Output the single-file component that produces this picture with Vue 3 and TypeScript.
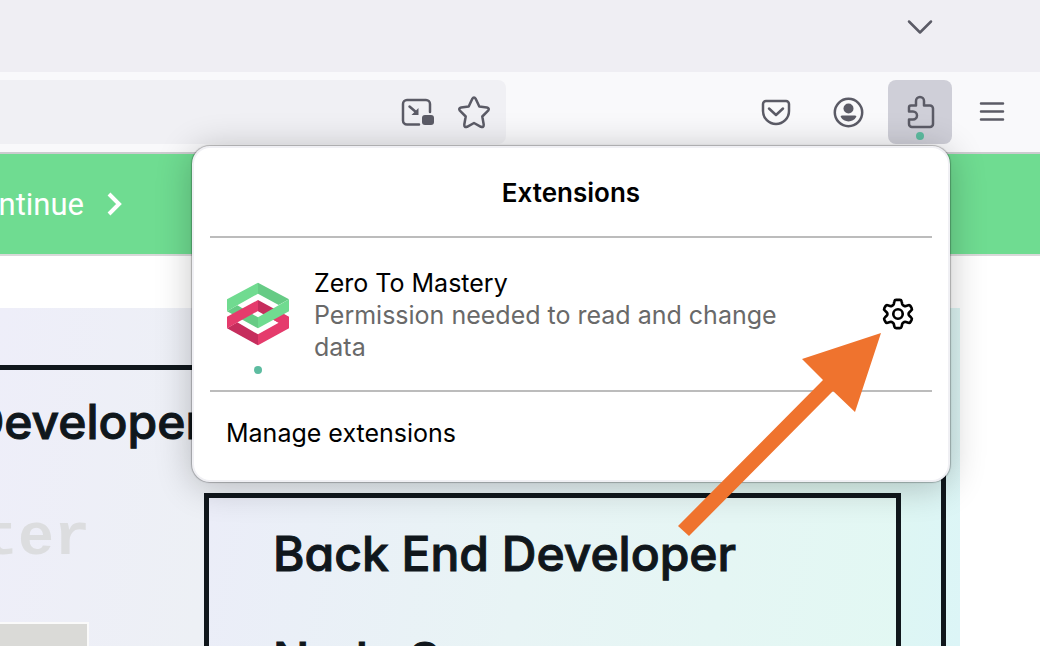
<script setup lang="ts">
interface Extension {
  name: string
  status: string
}

const extensions: Extension[] = [
  { name: 'Zero To Mastery', status: 'Permission needed to read and change data' },
]
</script>

<template>
  <div class="browser">
    <header class="tab-strip">
      <button class="tool tabs-button" type="button" aria-label="List all tabs">
        <svg width="28" height="18" viewBox="0 0 28 18"><path d="M3 3.500 14 14.500 25 3.500" class="line" /></svg>
      </button>
    </header>

    <div class="toolbar">
      <div class="address">
        <button class="tool" type="button" aria-label="Picture-in-picture">
          <svg width="36" height="32" viewBox="0 0 36 32">
            <path class="line" d="M19 28.500H7a4 4 0 0 1-4-4V8a4 4 0 0 1 4-4h19a4 4 0 0 1 4 4v8" />
            <path class="line" d="m9.500 10.500 7 6" />
            <path class="solid" d="M18.500 12v7h-7z" />
            <rect class="solid" x="22" y="19" width="12" height="10" rx="3" />
          </svg>
        </button>
        <button class="tool" type="button" aria-label="Bookmark this page">
          <svg width="36" height="36" viewBox="0 0 36 36">
            <path class="line" d="M16.200 5q1.800-3 3.600 0l3.500 7.600 7.600.9q3 .7 1.200 3.200l-5.800 5.800 1.400 8q.2 3.200-2.800 2.300L18 29l-6.900 3.800q-3 .9-2.800-2.300l1.400-8-5.800-5.800q-1.800-2.500 1.200-3.200l7.600-.9z" />
          </svg>
        </button>
      </div>

      <nav class="tools" aria-label="Browser tools">
        <button class="tool" type="button" aria-label="Save to Pocket">
          <svg width="32" height="30" viewBox="0 0 32 30">
            <path class="line" d="M6 4h20a3 3 0 0 1 3 3v7a13 13 0 0 1-26 0V7a3 3 0 0 1 3-3z" />
            <path class="line" d="m9 11.500 7 6.500 7-6.500" />
          </svg>
        </button>
        <button class="tool" type="button" aria-label="Account">
          <svg width="32" height="32" viewBox="0 0 32 32">
            <circle class="line" cx="16.500" cy="16.500" r="13.700" />
            <circle class="solid" cx="16.500" cy="12.500" r="5" />
            <path class="solid" d="M10 19.500h13q2 0 1.200 1.600a9 9 0 0 1-7.700 4.400 9 9 0 0 1-7.700-4.400Q8 19.500 10 19.500z" />
          </svg>
        </button>
        <button class="tool active" type="button" aria-label="Extensions" aria-expanded="true">
          <svg width="32" height="36" viewBox="0 0 32 36">
            <path class="line" d="M7 11.500h5V7a4 4 0 0 1 8 0v4.500h6a3 3 0 0 1 3 3V30a3 3 0 0 1-3 3H8a3 3 0 0 1-3-3v-4.500h4a4 4 0 0 0 0-8H5v-4a2 2 0 0 1 2-2z" />
          </svg>
          <span class="dot badge"></span>
        </button>
        <button class="tool" type="button" aria-label="Open application menu">
          <svg width="28" height="24" viewBox="0 0 28 24"><path class="line" d="M3 3.500h22M3 11.500h22M3 19.500h22" /></svg>
        </button>
      </nav>

      <section class="panel" aria-labelledby="panel-title">
        <h1 id="panel-title">Extensions</h1>
        <article v-for="item in extensions" :key="item.name" class="extension">
          <div class="logo">
            <svg width="64" height="64" viewBox="78 96 192 192">
              <path fill="#c62d5d" d="M174 150l62 34v34l-62-34zM81 235l31-18 62 36v33z" />
              <path fill="#66cb85" d="M174 98l93 50-31 17-62-34zM81 184l31-18 62 36v33z" />
              <path fill="#70db90" d="M174 98v33l-62 35-31 18v-36z" />
              <path fill="#e53b6c" d="M267 200v35l-93 51v-33l62-35-31-18 31-17z" />
              <path fill="#70db90" d="M267 148v36l-93 51v-33l62-36z" />
              <path fill="#e53b6c" d="M174 150v33L81 235v-35z" />
            </svg>
            <span class="dot"></span>
          </div>
          <div class="details">
            <h2>{{ item.name }}</h2>
            <p>{{ item.status }}</p>
          </div>
          <button class="gear" type="button" :aria-label="`Manage ${item.name}`">
            <svg width="32" height="34" viewBox="-1 -1 34 36">
              <path d="M14 2h4q1.500 0 1.800 1.500l.7 3q.3 1 1.300 1.500l.7.400q1 .4 2 .1l2.500-.8q1.500-.4 2.200.8l1.300 2.300q.7 1.300-.4 2.300l-2 2q-.9.900-.9 1.900t.9 1.900l2 2q1.100 1 .4 2.300l-1.300 2.300q-.7 1.200-2.200.8l-2.500-.8q-1-.3-2 .1l-.7.400q-1 .5-1.300 1.500l-.7 3Q19.500 32 18 32h-4q-1.500 0-1.800-1.500l-.7-3q-.3-1-1.300-1.500l-.7-.4q-1-.4-2-.1l-2.500.8q-1.500.4-2.200-.8l-1.300-2.300q-.7-1.300.4-2.300l2-2q.9-.9.900-1.900t-.9-1.900l-2-2q-1.100-1-.4-2.300l1.300-2.300Q3.500 7.300 5 7.700l2.500.8q1 .3 2-.1l.7-.4q1-.5 1.300-1.500l.7-3Q12.500 2 14 2z" />
              <circle cx="16" cy="17" r="5" />
            </svg>
          </button>
        </article>
        <button class="manage" type="button">Manage extensions</button>
      </section>
    </div>

    <main class="page">
      <div class="banner">
        <a href="#continue">
          <span class="banner-label">Continue</span>
          <svg width="18" height="28" viewBox="0 0 18 28"><path d="m3 4 10 10L3 24" fill="none" stroke="#fff" stroke-width="4" /></svg>
        </a>
      </div>
      <div class="board">
        <div class="outer-card">
          <div class="front">
            <div class="lettering cut">Developer</div>
            <div class="faded cut">ter</div>
            <div class="block"></div>
          </div>
          <div class="inner-card">
            <div class="lettering">Back End Developer</div>
            <div class="lettering">Node S</div>
          </div>
        </div>
      </div>
    </main>

    <svg class="arrow" width="204" height="204" viewBox="678 333 204 204" aria-hidden="true">
      <path fill="#ef732e" d="M881 333 855 412 833 391 689 536 678 526 823 380 802 359z" />
    </svg>
  </div>
</template>

<style>
html,
body {
  margin: 0;
}
</style>

<style scoped>
.browser {
  position: relative;
  display: flex;
  flex-direction: column;
  height: 100vh;
  overflow: hidden;
  background: #fff;
  font-family: Inter, "Liberation Sans", sans-serif;
}
button {
  margin: 0;
  padding: 0;
  border: 0;
  background: none;
  color: inherit;
  font: inherit;
}
svg {
  display: block;
}
.line {
  fill: none;
  stroke: #5b5b66;
  stroke-width: 2.5;
  stroke-linecap: round;
  stroke-linejoin: round;
}
.solid {
  fill: #5b5b66;
}
.tab-strip {
  display: flex;
  flex: none;
  justify-content: flex-end;
  height: 72px;
  padding-right: 88px;
  background: #efeef3;
}
.tab-strip .tabs-button {
  height: 54px;
}
.toolbar {
  position: relative;
  z-index: 1;
  display: flex;
  flex: none;
  align-items: center;
  justify-content: space-between;
  height: 80px;
  padding-right: 16px;
  border-bottom: 2px solid #cccccf;
  background: #f9f9fb;
}
.tool {
  display: flex;
  align-items: center;
  justify-content: center;
  width: 64px;
  height: 64px;
}
.address {
  display: flex;
  box-sizing: border-box;
  justify-content: flex-end;
  width: 506px;
  padding-right: 4px;
  border-radius: 0 8px 8px 0;
  background: #f0f0f4;
}
.address .tool {
  width: 56px;
}
.tools {
  display: flex;
  gap: 8px;
}
.active {
  position: relative;
  border-radius: 8px;
  background: #cfcfd8;
}
.dot {
  width: 8px;
  height: 8px;
  border-radius: 50%;
  background: #5dbca0;
}
.badge {
  position: absolute;
  bottom: 4px;
  left: 28px;
}
.panel {
  position: absolute;
  top: 74px;
  right: 90px;
  left: 192px;
  box-sizing: border-box;
  padding: 0 16px;
  border: 2px solid #f0f0f4;
  border-radius: 18px;
  background: #fff;
  box-shadow: 0 0 1px 1px rgba(0, 0, 0, 0.25), 0 4px 36px rgba(0, 0, 0, 0.24);
  color: #000;
  font-size: 25px;
  line-height: 32px;
}
h1,
h2,
p {
  margin: 0;
  font-size: inherit;
}
h1 {
  padding: 29px 0 27px;
  font-size: 26px;
  font-weight: 600;
  text-align: center;
}
.extension {
  display: flex;
  align-items: center;
  padding: 16px 18px 16px 16px;
  border-top: 2px solid #bcbcbc;
  border-bottom: 2px solid #bcbcbc;
}
.logo {
  display: flex;
  flex-direction: column;
  align-items: center;
  gap: 20px;
  padding-top: 28px;
}
.details {
  flex: 1;
  padding: 2px 60px 0 24px;
}
h2 {
  font-weight: 400;
}
p {
  color: #696969;
}
.gear path,
.gear circle {
  fill: none;
  stroke: #000;
  stroke-width: 2.8;
}
.manage {
  display: block;
  width: 100%;
  padding: 25px 16px 31px;
  text-align: left;
}
.page {
  display: flex;
  flex: 1;
  flex-direction: column;
  min-height: 0;
}
.banner {
  display: flex;
  flex: none;
  align-items: center;
  height: 100px;
  border-bottom: 2px solid #d9d9d9;
  background: #6fdc91;
}
.banner a {
  display: flex;
  align-items: center;
  gap: 22px;
  color: #fff;
  font: 31px Roboto, sans-serif;
  text-decoration: none;
}
.banner-label {
  display: flex;
  justify-content: flex-end;
  width: 84px;
}
.board {
  flex: 1;
  min-height: 0;
  margin: 52px 80px 0 0;
  padding: 57px 14px 0 0;
  overflow: hidden;
  background: linear-gradient(100deg, #eeeef9 0%, #edf0f5 25%, #e6f1f4 55%, #dff7f0 85%, #dcf5f7 100%);
}
.outer-card {
  display: flex;
  height: 100%;
  border: 5px solid #10171c;
  border-left: 0;
}
.front {
  display: flex;
  flex: none;
  flex-direction: column;
  width: 204px;
  overflow: hidden;
}
.lettering {
  color: #10171c;
  font: 500 48px/60px Inter, sans-serif;
  font-feature-settings: "cv11";
  white-space: nowrap;
  -webkit-text-stroke: 1px #10171c;
}
.cut {
  display: flex;
  justify-content: flex-end;
}
.front .lettering {
  padding-top: 22px;
}
.faded {
  padding: 56px 114px 0 0;
  color: #dcdddf;
  font: 700 60px/60px "Liberation Mono", monospace;
}
.block {
  width: 87px;
  height: 60px;
  margin-top: 54px;
  border: solid #fafafa;
  border-width: 2px 2px 0 0;
  background: #dadad7;
}
.inner-card {
  display: flex;
  flex: 1;
  flex-direction: column;
  gap: 46px;
  height: 200px;
  margin: 123px 40px 0 0;
  padding: 26px 0 0 64px;
  border: 5px solid #10171c;
  background: linear-gradient(100deg, #ebedf8, #e8f4f5 45%, #e2f8f3);
}
.arrow {
  position: absolute;
  z-index: 2;
  top: 333px;
  right: 158px;
}
</style>
